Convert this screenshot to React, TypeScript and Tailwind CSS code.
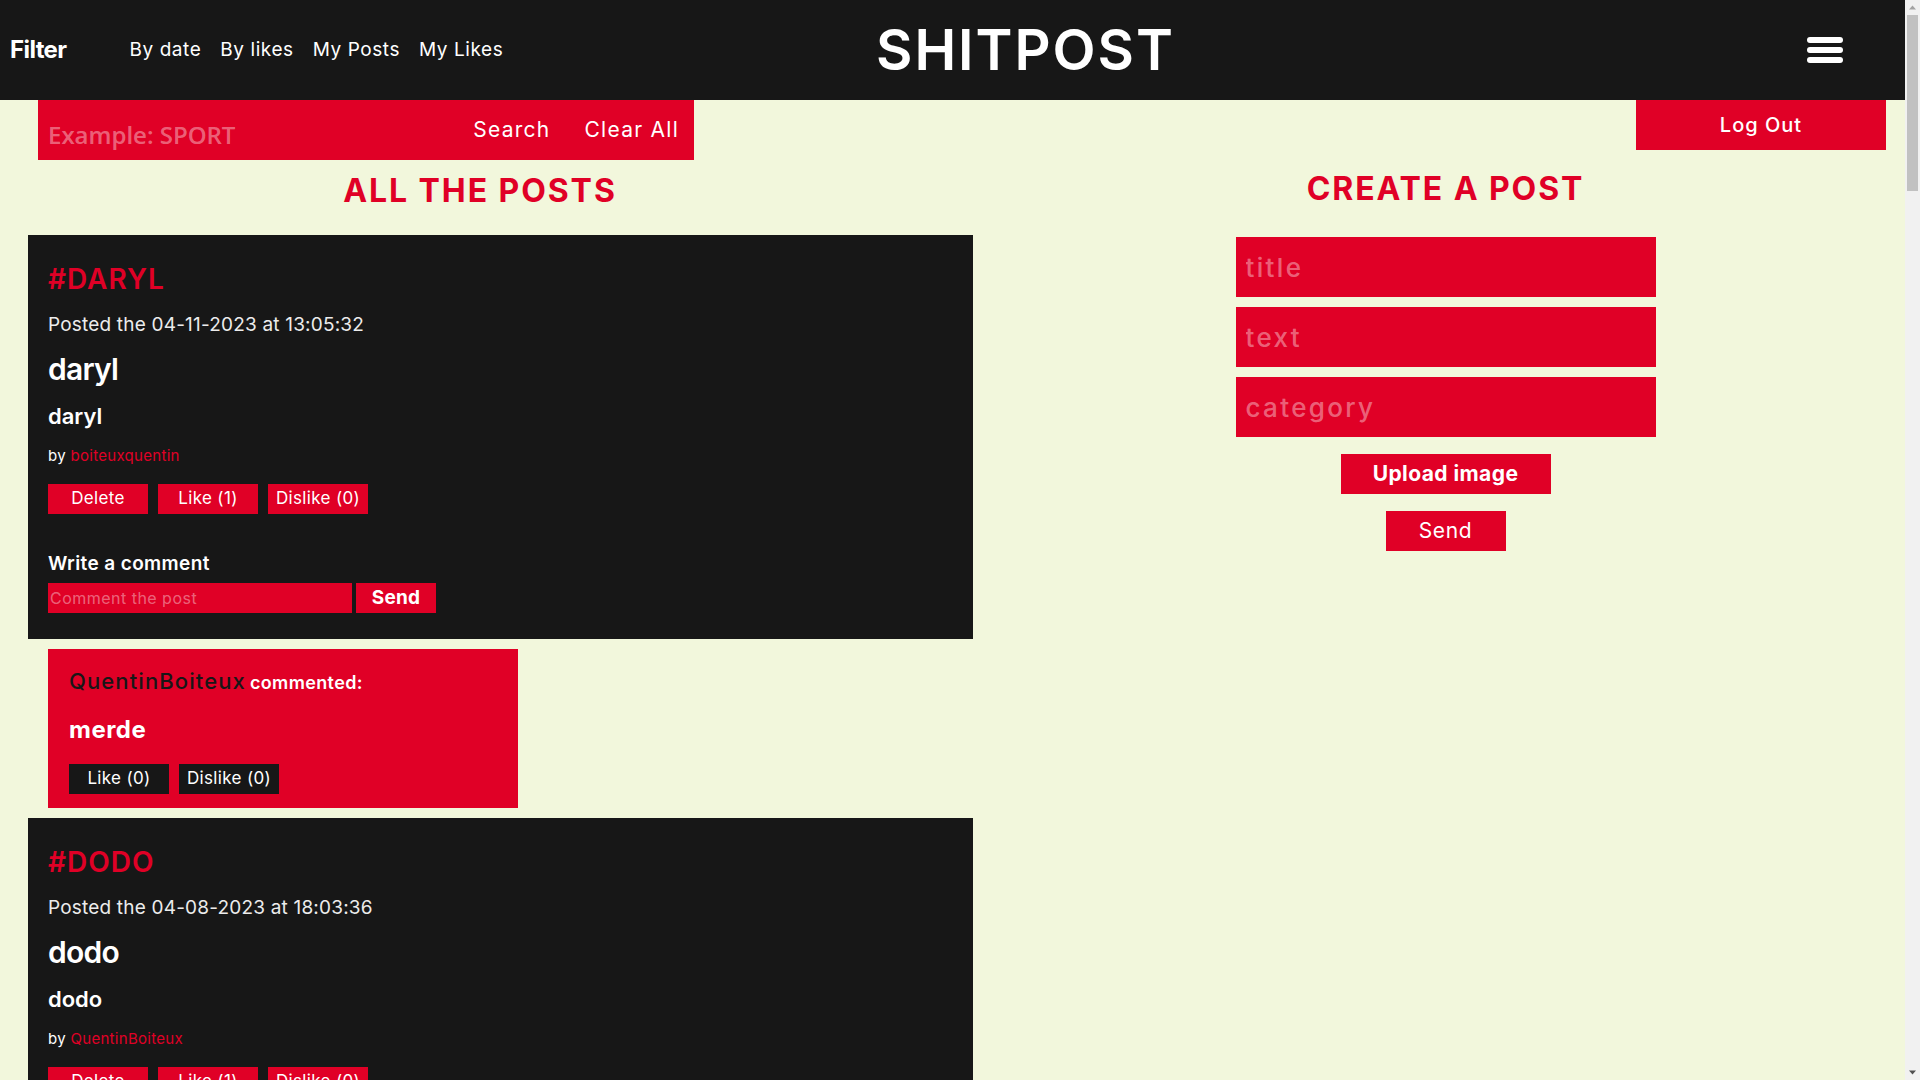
const posts = [
  {
    tag: "DARYL",
    date: "04-11-2023",
    time: "13:05:32",
    title: "daryl",
    text: "daryl",
    author: "boiteuxquentin",
    likes: 1,
    dislikes: 0,
    comments: [{ author: "QuentinBoiteux", text: "merde", likes: 0, dislikes: 0 }],
  },
  {
    tag: "DODO",
    date: "04-08-2023",
    time: "18:03:36",
    title: "dodo",
    text: "dodo",
    author: "QuentinBoiteux",
    likes: 1,
    dislikes: 0,
    comments: [],
  },
];

type Post = (typeof posts)[number];

const Header = () => (
  <header className="flex h-[100px] items-center bg-[#171717] text-white">
    <div className="flex w-[876px] items-center">
      <span className="pl-[10px] text-[24px] font-bold tracking-tight">Filter</span>
      <nav className="ml-[63px] flex gap-[19px] text-[19px] tracking-[0.03em]">
        <a>By date</a>
        <a>By likes</a>
        <a>My Posts</a>
        <a>My Likes</a>
      </nav>
    </div>
    <h1 className="text-[56px] font-semibold leading-none tracking-[0.035em]">SHITPOST</h1>
    <button className="ml-auto mr-[62px]">
      <svg width="36" height="26" viewBox="0 0 36 26" fill="white">
        <rect x="0" y="0" width="36" height="6" rx="3" />
        <rect x="0" y="10" width="36" height="6" rx="3" />
        <rect x="0" y="20" width="36" height="6" rx="3" />
      </svg>
    </button>
  </header>
);

const PostCard = ({ post }: { post: Post }) => (
  <>
    <article className="mt-[10px] bg-[#171717] pb-[26px] pl-[20px] pt-[28px] text-white first:mt-0">
      <h2 className="text-[28px] font-semibold leading-[32px] tracking-[0.035em] text-[#e00026]">#{post.tag}</h2>
      <p className="mt-[18px] text-[19px] leading-[24px] tracking-[0.01em] text-[#ececec]">
        Posted the {post.date} at {post.time}
      </p>
      <h3 className="mt-[14px] text-[30px] font-semibold leading-[36px] tracking-tight">{post.title}</h3>
      <p className="mt-[15px] text-[22px] font-semibold leading-[28px]">{post.text}</p>
      <p className="mt-[16px] text-[15px] leading-[20px] tracking-[0.02em]">
        by <span className="text-[#e00026]">{post.author}</span>
      </p>
      <div className="mt-[18px] flex gap-[10px] text-[17px] tracking-[0.02em]">
        <button className="h-[30px] w-[100px] bg-[#e00026]">Delete</button>
        <button className="h-[30px] w-[100px] bg-[#e00026]">Like ({post.likes})</button>
        <button className="h-[30px] w-[100px] bg-[#e00026]">Dislike ({post.dislikes})</button>
      </div>
      <p className="mt-[38px] text-[19px] font-semibold leading-[24px] tracking-[0.02em]">Write a comment</p>
      <div className="mt-[7px] flex gap-[4px]">
        <input
          placeholder="Comment the post"
          className="h-[30px] w-[304px] bg-[#e00026] px-[2px] text-[16px] tracking-[0.03em] outline-none placeholder:text-white/40"
        />
        <button className="h-[30px] w-[80px] bg-[#e00026] text-[19px] font-bold tracking-[0.01em]">Send</button>
      </div>
    </article>
    {post.comments.map((c) => (
      <div key={c.author + c.text} className="ml-[20px] mt-[10px] w-[470px] bg-[#e00026] pb-[14px] pl-[21px] pt-[18px]">
        <p className="leading-[28px]">
          <span className="text-[22px] font-medium tracking-[0.05em] text-[#171717]">{c.author}</span>
          <span className="ml-[4px] text-[18px] font-semibold tracking-[0.02em] text-white">commented:</span>
        </p>
        <p className="mt-[19px] text-[24px] font-bold leading-[28px] tracking-[0.02em] text-white">{c.text}</p>
        <div className="mt-[20px] flex gap-[10px] text-[17px] tracking-[0.02em] text-white">
          <button className="h-[30px] w-[100px] bg-[#171717]">Like ({c.likes})</button>
          <button className="h-[30px] w-[100px] bg-[#171717]">Dislike ({c.dislikes})</button>
        </div>
      </div>
    ))}
  </>
);

const Scrollbar = () => (
  <aside className="sticky top-0 flex h-[1080px] w-[15px] shrink-0 flex-col items-center bg-[#f1f1f1]">
    <svg width="15" height="15" viewBox="0 0 15 15" className="shrink-0">
      <path d="M4 9.5 L7.5 5.5 L11 9.5 Z" fill="#a3a3a3" />
    </svg>
    <div className="h-[176px] w-[11px] bg-[#c1c1c1]" />
    <div className="flex-1" />
    <svg width="15" height="15" viewBox="0 0 15 15" className="shrink-0">
      <path d="M4 5.5 L7.5 9.5 L11 5.5 Z" fill="#505050" />
    </svg>
  </aside>
);

export default function App() {
  return (
    <div className="flex items-start bg-[#f2f7dc] font-['Inter',sans-serif]">
      <main className="min-h-screen w-[1905px] shrink-0 pb-[40px]">
        <Header />
        <div className="flex items-start justify-between">
          <div className="ml-[38px] flex h-[60px] w-[656px] items-center bg-[#e00026] pr-[15px] text-white">
            <input
              placeholder="Example: SPORT"
              className="h-full min-w-0 flex-1 bg-transparent pl-[10px] pt-[8px] font-['Open_Sans',sans-serif] text-[24px] font-semibold outline-none placeholder:text-white/40"
            />
            <div className="flex gap-[34px] text-[21px] tracking-[0.06em]">
              <button>Search</button>
              <button>Clear All</button>
            </div>
          </div>
          <button className="mr-[19px] h-[50px] w-[250px] bg-[#e00026] text-[20px] font-medium tracking-[0.05em] text-white">
            Log Out
          </button>
        </div>
        <div className="flex items-start">
          <section className="w-[960px]">
            <h2 className="mt-[11px] text-center text-[32px] font-bold leading-[40px] tracking-[0.06em] text-[#e00026]">
              ALL THE POSTS
            </h2>
            <div className="ml-[28px] mt-[24px] flex w-[945px] flex-col">
              {posts.map((p) => (
                <PostCard key={p.tag} post={p} />
              ))}
            </div>
          </section>
          <section className="flex flex-1 flex-col items-center pl-[26px]">
            <h2 className="mt-[9px] text-[32px] font-bold leading-[40px] tracking-[0.06em] text-[#e00026]">
              CREATE A POST
            </h2>
            <div className="mt-[28px] flex flex-col gap-[10px]">
              {["title", "text", "category"].map((ph) => (
                <input
                  key={ph}
                  placeholder={ph}
                  className="h-[60px] w-[420px] bg-[#e00026] pl-[10px] text-[26px] font-medium tracking-[0.09em] text-white outline-none placeholder:text-white/40"
                />
              ))}
            </div>
            <button className="mt-[17px] h-[40px] w-[210px] bg-[#e00026] text-[21px] font-bold tracking-[0.02em] text-white">
              Upload image
            </button>
            <button className="mt-[17px] h-[40px] w-[120px] bg-[#e00026] text-[21px] tracking-[0.03em] text-white">
              Send
            </button>
          </section>
        </div>
      </main>
      <Scrollbar />
    </div>
  );
}
